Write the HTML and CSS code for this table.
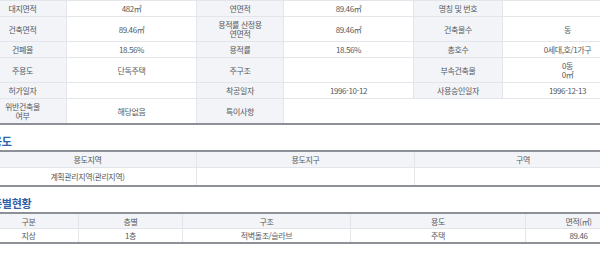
FILE: index.html
```html
<!DOCTYPE html>
<html lang="ko">
<head>
<meta charset="utf-8">
<title>건축물 정보</title>
<link rel="stylesheet" href="styles.css">
</head>
<body>
<div class="page">
  <table class="grid info">
    <colgroup>
      <col class="w-label1"><col class="w-value"><col class="w-label2"><col class="w-value"><col class="w-label3"><col class="w-value">
    </colgroup>
    <tbody>
      <tr class="first">
        <th class="label">대지면적</th><td>482㎡</td>
        <th class="label">연면적</th><td>89.46㎡</td>
        <th class="label">명칭 및 번호</th><td></td>
      </tr>
      <tr>
        <th class="label">건축면적</th><td>89.46㎡</td>
        <th class="label">용적률 산정용<br>연면적</th><td>89.46㎡</td>
        <th class="label">건축물수</th><td>동</td>
      </tr>
      <tr>
        <th class="label">건폐율</th><td>18.56%</td>
        <th class="label">용적률</th><td>18.56%</td>
        <th class="label">총호수</th><td>0세대,호/1가구</td>
      </tr>
      <tr>
        <th class="label">주용도</th><td>단독주택</td>
        <th class="label">주구조</th><td></td>
        <th class="label">부속건축물</th><td>0동<br>0㎡</td>
      </tr>
      <tr>
        <th class="label">허가일자</th><td></td>
        <th class="label">착공일자</th><td>1996-10-12</td>
        <th class="label">사용승인일자</th><td>1996-12-13</td>
      </tr>
      <tr>
        <th class="label">위반건축물<br>여부</th><td>해당없음</td>
        <th class="label">특이사항</th><td colspan="3"></td>
      </tr>
    </tbody>
  </table>

  <h3 class="sec-title">용도</h3>
  <table class="grid zone">
    <colgroup><col class="w-third"><col class="w-third"><col></colgroup>
    <thead>
      <tr><th class="label">용도지역</th><th class="label">용도지구</th><th class="label">구역</th></tr>
    </thead>
    <tbody>
      <tr><td>계획관리지역(관리지역)</td><td></td><td></td></tr>
    </tbody>
  </table>

  <h3 class="sec-title">층별현황</h3>
  <table class="grid floors">
    <colgroup><col class="w-f1"><col class="w-f2"><col class="w-f3"><col class="w-f4"><col></colgroup>
    <thead>
      <tr><th class="label">구분</th><th class="label">층별</th><th class="label">구조</th><th class="label">용도</th><th class="label">면적(㎡)</th></tr>
    </thead>
    <tbody>
      <tr><td>지상</td><td>1층</td><td>적벽돌조/슬라브</td><td>주택</td><td>89.46</td></tr>
    </tbody>
  </table>

  <h3 class="sec-title">소유자현황</h3>
</div>
</body>
</html>
```

FILE: styles.css
```css
html, body {
  margin: 0;
  padding: 0;
  background: #ffffff;
  overflow: hidden;
}

body {
  font-family: "Noto Sans CJK KR", "Noto Sans", sans-serif;
  font-size: 8px;
  color: #555a60;
}

.page {
  width: 654px;
  margin-left: -22px;
}

.grid {
  width: 100%;
  border-collapse: collapse;
  table-layout: fixed;
}

.grid th,
.grid td {
  border: 1px solid #e2e5e9;
  padding: 3px 2px;
  line-height: 9px;
  text-align: center;
  font-weight: normal;
  letter-spacing: -0.4px;
  white-space: nowrap;
}

.grid .label {
  background: #f3f4f7;
}

.info {
  border-bottom: 2px solid #8d9197;
}

.info .first th,
.info .first td {
  border-top: 1px solid #e2e5e9;
}

.w-label1 { width: 88px; }
.w-label2 { width: 87px; }
.w-label3 { width: 89px; }
.w-value { width: 130px; }

.sec-title {
  margin: 9px 0 1px;
  padding-left: 14px;
  font-size: 11px;
  line-height: 15px;
  font-weight: bold;
  color: #2f5fa6;
  letter-spacing: -0.3px;
}

.zone,
.floors {
  border-top: 2px solid #8d9197;
  border-bottom: 2px solid #8d9197;
}

.w-third { width: 218px; }

.zone tbody td {
  padding-top: 4px;
  padding-bottom: 4px;
}

.floors thead th {
  padding: 3px 2px 2px;
}

.floors tbody td {
  padding: 2px 2px;
}

.w-f1 { width: 100px; }
.w-f2 { width: 104px; }
.w-f3 { width: 168px; }
.w-f4 { width: 175px; }
```
